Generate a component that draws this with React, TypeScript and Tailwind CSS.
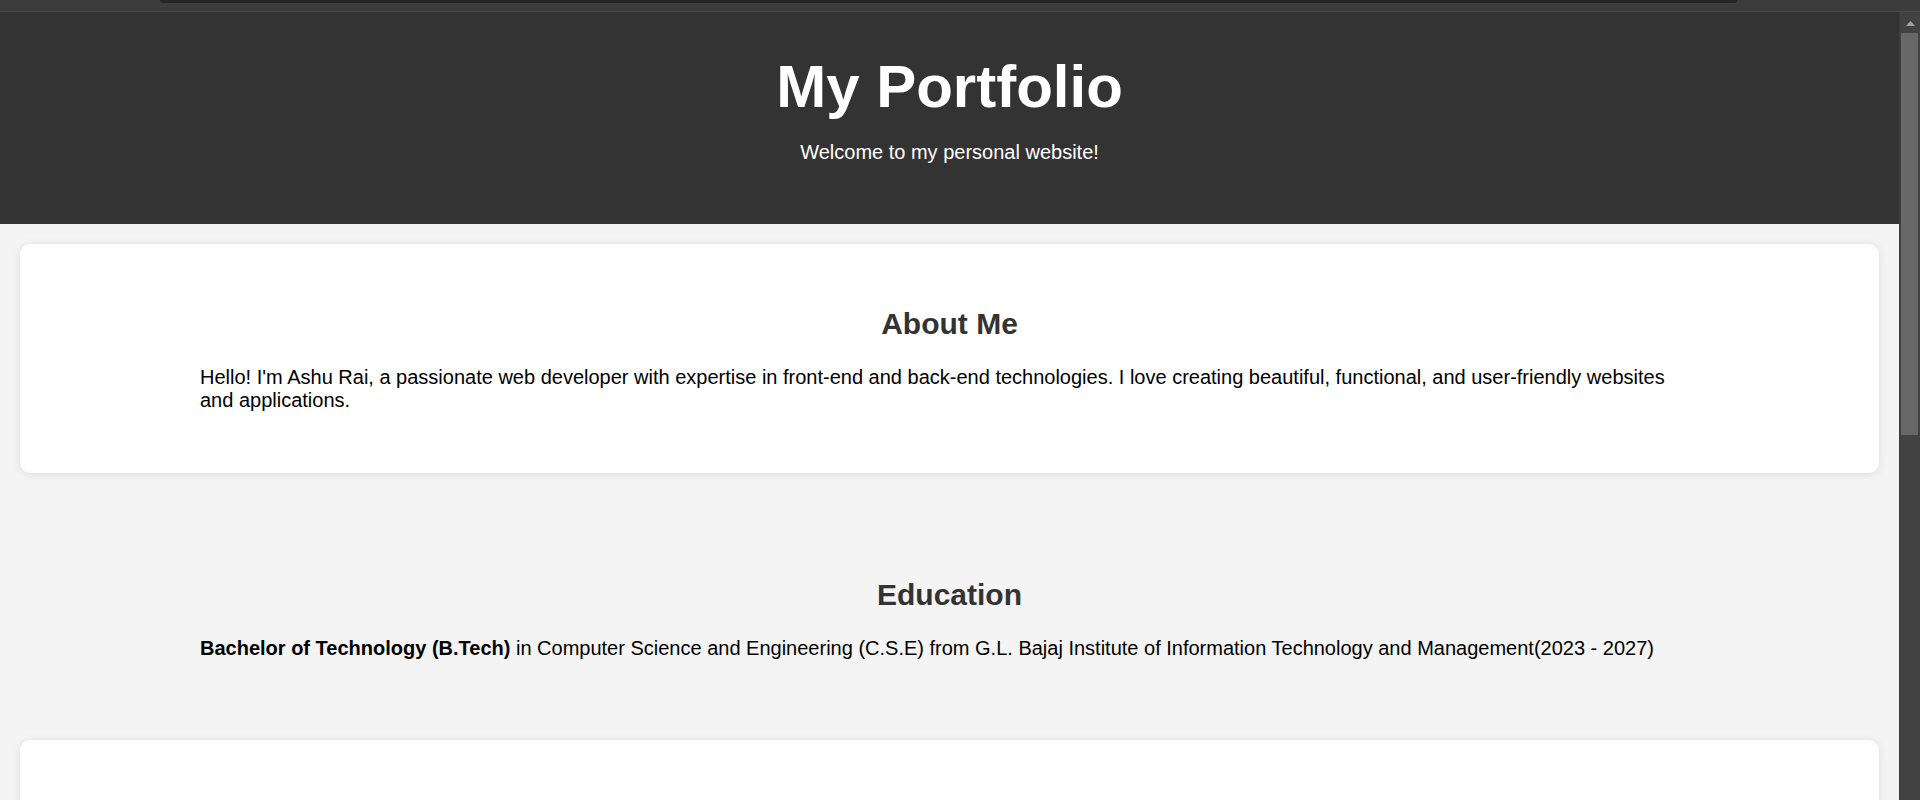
import React from 'react';

const font = { fontFamily: '"Liberation Sans", Arial, sans-serif' };

interface SectionProps {
  title: string;
  card?: boolean;
  top?: string;
  bottom?: string;
  children: React.ReactNode;
}

const Section: React.FC<SectionProps> = ({ title, card = true, top = 'pt-[63px]', bottom = 'pb-[61px]', children }) => (
  <section
    className={`${top} ${bottom} px-[180px] ${card ? 'bg-white rounded-[10px] shadow-[0_1px_8px_rgba(0,0,0,0.1)]' : ''}`}
  >
    <h2 className="text-center text-[30px] leading-[normal] font-bold text-[#333] mb-[25px]">{title}</h2>
    <div className="text-[20px] leading-[normal] text-black">{children}</div>
  </section>
);

const Scrollbar = () => (
  <div className="w-[21px] shrink-0 bg-[#424242] border-l border-[#3a3a3a] flex flex-col pt-[9px]">
    <svg width="9" height="5" viewBox="0 0 9 5" className="self-center">
      <polygon points="4.5,0 9,5 0,5" fill="#a3a3a3" />
    </svg>
    <div className="mt-[7px] ml-px mr-[2px] h-[402px] bg-[#686868]" />
  </div>
);

export default function App() {
  return (
    <div className="w-full h-[800px] overflow-hidden flex flex-col bg-[#f4f4f4]" style={font}>
      {/* browser strip */}
      <div className="h-[11px] bg-[#3c3c3c] flex justify-start shrink-0">
        <div className="ml-[160px] w-[1577px] h-[3px] bg-[#262626] rounded-b-[4px]" />
      </div>
      <div className="h-px bg-[#4a4a4a] shrink-0" />

      <div className="flex flex-1 min-h-0">
        <div className="flex-1 min-w-0 overflow-hidden">
          <header className="bg-[#333] text-white text-center pt-[40px] pb-[40px]">
            <h1 className="text-[60px] leading-[normal] font-bold">My Portfolio</h1>
            <p className="text-[20px] leading-[normal] mt-[20px] mb-[20px]">Welcome to my personal website!</p>
          </header>

          <main className="px-[20px] pt-[20px] flex flex-col gap-[20px]">
            <Section title="About Me">
              <p>
                Hello! I'm Ashu Rai, a passionate web developer with expertise in front-end and back-end
                technologies. I love creating beautiful, functional, and user-friendly websites and applications.
              </p>
            </Section>

            <Section title="Education" card={false} top="pt-[85px]" bottom="pb-[60px]">
              <p>
                <strong>Bachelor of Technology (B.Tech)</strong> in Computer Science and Engineering (C.S.E) from
                G.L. Bajaj Institute of Information Technology and Management(2023 - 2027)
              </p>
            </Section>

            {/* next card, its content is below the fold */}
            <section className="h-[200px] bg-white rounded-[10px] shadow-[0_1px_8px_rgba(0,0,0,0.1)]" />
          </main>
        </div>
        <Scrollbar />
      </div>
    </div>
  );
}
